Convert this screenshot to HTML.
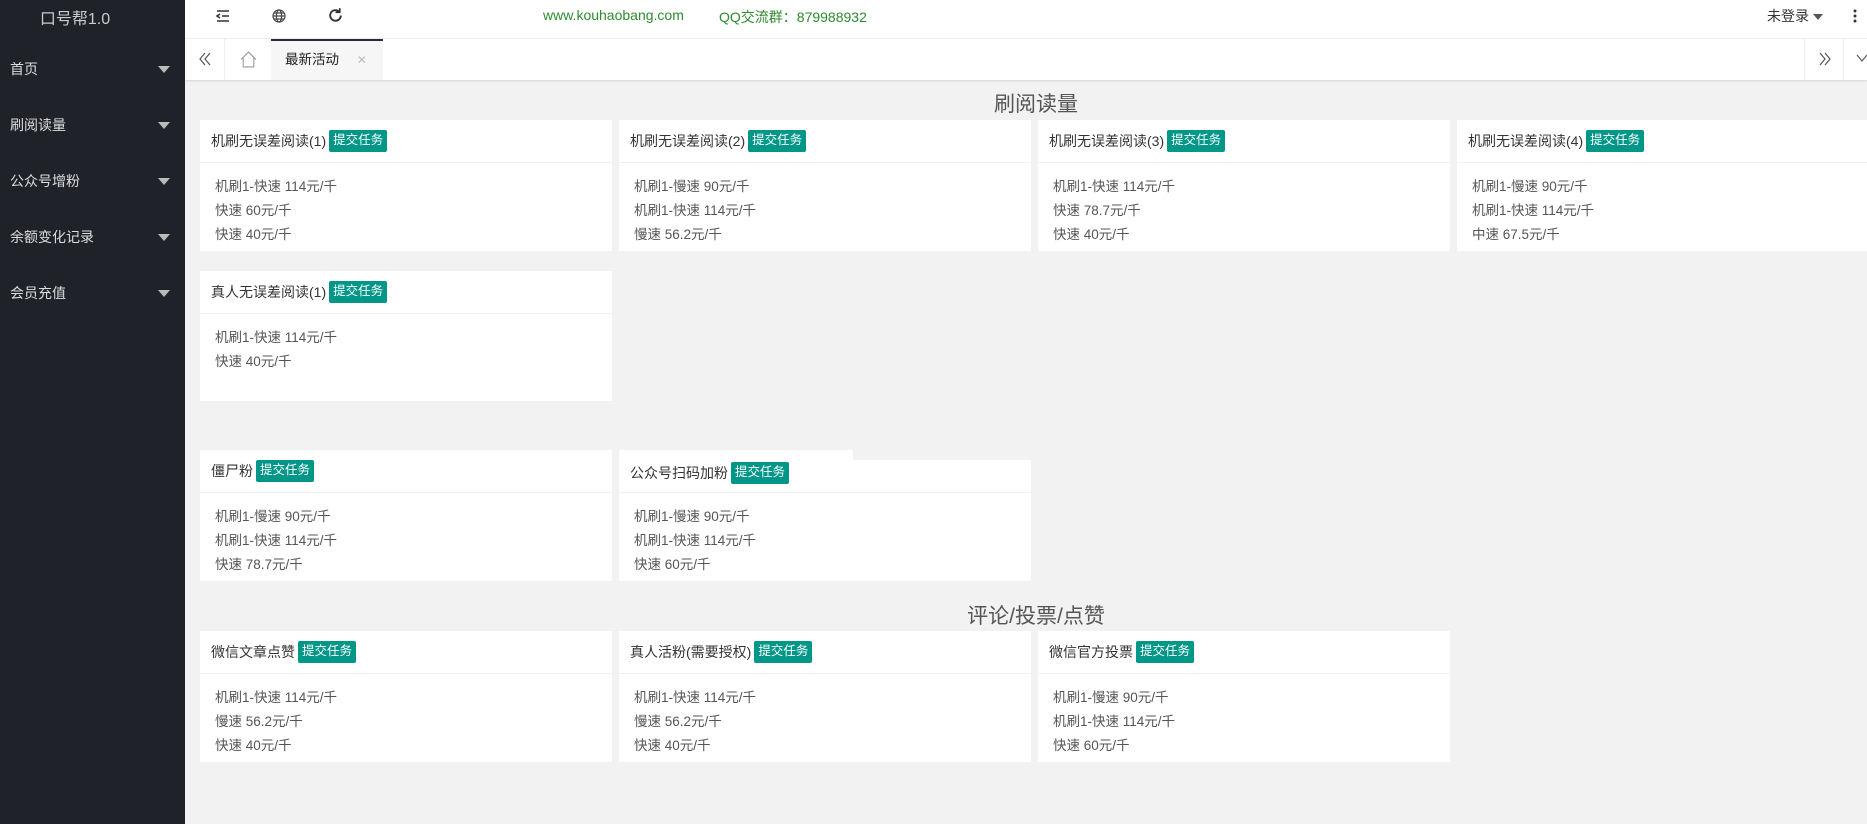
<!DOCTYPE html>
<html><head><meta charset="utf-8">
<style>
*{margin:0;padding:0;box-sizing:border-box}
body{width:1867px;height:824px;overflow:hidden;background:#f2f2f2;font-family:"Liberation Sans","Noto Sans CJK SC",sans-serif;position:relative;color:#333}
.abs{position:absolute}
#side{left:0;top:0;width:185px;height:824px;background:#20222a}
.logo{left:0;width:150px;top:5px;text-align:center;color:#ccc;font-size:16px}
.mi{left:10px;color:#ddd;font-size:14px}
.tri{left:158px;width:0;height:0;border-left:6px solid transparent;border-right:6px solid transparent;border-top:7px solid #bbb}
#hdr{left:185px;top:0;width:1682px;height:39px;background:#fff;border-bottom:1px solid #eee}
#tabs{left:185px;top:39px;width:1682px;height:41px;background:#fff;box-shadow:0 1px 2px rgba(0,0,0,.12)}
.card{position:absolute;background:#fff;width:412px}
.ch{height:43px;border-bottom:1px solid #f2f2f2;padding-left:11px;font-size:14px;line-height:43px;color:#333;white-space:nowrap}
.bd{display:inline-block;background:#009688;color:#fff;font-size:12.5px;line-height:21px;height:22px;padding:0 4px;border-radius:2px;vertical-align:middle;margin-left:3px;position:relative;top:-1px}
.cb{padding:12px 0 0 15px;font-size:13.5px;color:#555;line-height:24px}
.sec{font-size:21px;color:#555;width:1682px;left:195px;text-align:center}
</style></head><body>
<div id="side" class="abs">
 <div class="abs logo">口号帮1.0</div>
 <div class="abs mi" style="top:59px">首页</div><div class="abs tri" style="top:66px"></div>
 <div class="abs mi" style="top:115px">刷阅读量</div><div class="abs tri" style="top:122px"></div>
 <div class="abs mi" style="top:171px">公众号增粉</div><div class="abs tri" style="top:178px"></div>
 <div class="abs mi" style="top:227px">余额变化记录</div><div class="abs tri" style="top:234px"></div>
 <div class="abs mi" style="top:283px">会员充值</div><div class="abs tri" style="top:290px"></div>
</div>
<div id="hdr" class="abs">
 <svg class="abs" style="left:30px;top:8px" width="16" height="16" viewBox="0 0 16 16"><path d="M2 3h12M7 8h7M2 13h12M5 6L2 8l3 2" stroke="#333" stroke-width="1.6" fill="none"/></svg>
 <svg class="abs" style="left:86px;top:8px" width="16" height="16" viewBox="0 0 16 16" fill="none" stroke="#444" stroke-width="1.2"><circle cx="8" cy="8" r="6"/><ellipse cx="8" cy="8" rx="2.6" ry="6"/><path d="M2 8h12M3 5h10M3 11h10"/></svg>
 <svg class="abs" style="left:142px;top:7px" width="17" height="17" viewBox="0 0 16 16" fill="none" stroke="#333" stroke-width="1.8"><path d="M13 8a5 5 0 1 1-1.5-3.6"/><path d="M12 1v4H8" stroke-width="1.6"/></svg>
 <div class="abs" style="left:358px;top:7px;color:#2e8b2e;font-size:14px">www.kouhaobang.com</div>
 <div class="abs" style="left:534px;top:7px;color:#2e8b2e;font-size:14px">QQ交流群：879988932</div>
 <div class="abs" style="left:1582px;top:6px;font-size:14px;color:#333">未登录 <span style="display:inline-block;border-left:5px solid transparent;border-right:5px solid transparent;border-top:6px solid #555;vertical-align:middle"></span></div>
 <svg class="abs" style="left:1668px;top:8px" width="4" height="16"><circle cx="2" cy="3" r="1.5" fill="#333"/><circle cx="2" cy="8" r="1.5" fill="#333"/><circle cx="2" cy="13" r="1.5" fill="#333"/></svg>
</div>
<div id="tabs" class="abs">
 <div class="abs" style="left:0;top:0;width:40px;height:41px;border-right:1px solid #eee"></div>
 <svg class="abs" style="left:13px;top:13px" width="14" height="14" viewBox="0 0 14 14" fill="none" stroke="#555" stroke-width="1.2"><path d="M7 1L2 7l5 6M12 1L7 7l5 6"/></svg>
 <svg class="abs" style="left:55px;top:12px" width="17" height="17" viewBox="0 0 16 16" fill="none" stroke="#999" stroke-width="1"><path d="M1 8L8 1l7 7M3 6v9h10V6"/></svg>
 <div class="abs" style="left:86px;top:0;width:112px;height:41px;background:#f6f6f6;border-top:2px solid #292b34;font-size:13.5px;line-height:37px;padding-left:14px;color:#222">最新活动 <span style="color:#bbb;margin-left:14px;font-size:12px">✕</span></div>
 <div class="abs" style="left:1619px;top:0;width:40px;height:41px;border-left:1px solid #eee;border-right:1px solid #eee"></div>
 <svg class="abs" style="left:1633px;top:13px" width="14" height="14" viewBox="0 0 14 14" fill="none" stroke="#555" stroke-width="1.2"><path d="M2 1l5 6-5 6M7 1l5 6-5 6"/></svg>
 <svg class="abs" style="left:1671px;top:15px" width="12" height="8" viewBox="0 0 12 8" fill="none" stroke="#555" stroke-width="1.1"><path d="M1 1l5 6 5-6"/></svg>
</div>

<div class="abs sec" style="top:88px">刷阅读量</div>

<div class="card" style="left:200px;top:120px;height:131px"><div class="ch">机刷无误差阅读(1)<span class="bd">提交任务</span></div><div class="cb">机刷1-快速 114元/千<br>快速 60元/千<br>快速 40元/千</div></div>
<div class="card" style="left:619px;top:120px;height:131px"><div class="ch">机刷无误差阅读(2)<span class="bd">提交任务</span></div><div class="cb">机刷1-慢速 90元/千<br>机刷1-快速 114元/千<br>慢速 56.2元/千</div></div>
<div class="card" style="left:1038px;top:120px;height:131px"><div class="ch">机刷无误差阅读(3)<span class="bd">提交任务</span></div><div class="cb">机刷1-快速 114元/千<br>快速 78.7元/千<br>快速 40元/千</div></div>
<div class="card" style="left:1457px;top:120px;height:131px"><div class="ch">机刷无误差阅读(4)<span class="bd">提交任务</span></div><div class="cb">机刷1-慢速 90元/千<br>机刷1-快速 114元/千<br>中速 67.5元/千</div></div>

<div class="card" style="left:200px;top:271px;height:130px"><div class="ch">真人无误差阅读(1)<span class="bd">提交任务</span></div><div class="cb">机刷1-快速 114元/千<br>快速 40元/千</div></div>

<div class="card" style="left:200px;top:450px;height:131px"><div class="ch">僵尸粉<span class="bd">提交任务</span></div><div class="cb">机刷1-慢速 90元/千<br>机刷1-快速 114元/千<br>快速 78.7元/千</div></div>
<div class="abs" style="left:619px;top:450px;width:234px;height:12px;background:#fff"></div>
<div class="card" style="left:619px;top:460px;height:121px"><div class="ch" style="height:33px;line-height:26px">公众号扫码加粉<span class="bd">提交任务</span></div><div class="cb">机刷1-慢速 90元/千<br>机刷1-快速 114元/千<br>快速 60元/千</div></div>

<div class="abs sec" style="top:600px">评论/投票/点赞</div>

<div class="card" style="left:200px;top:631px;height:131px"><div class="ch">微信文章点赞<span class="bd">提交任务</span></div><div class="cb">机刷1-快速 114元/千<br>慢速 56.2元/千<br>快速 40元/千</div></div>
<div class="card" style="left:619px;top:631px;height:131px"><div class="ch">真人活粉(需要授权)<span class="bd">提交任务</span></div><div class="cb">机刷1-快速 114元/千<br>慢速 56.2元/千<br>快速 40元/千</div></div>
<div class="card" style="left:1038px;top:631px;height:131px"><div class="ch">微信官方投票<span class="bd">提交任务</span></div><div class="cb">机刷1-慢速 90元/千<br>机刷1-快速 114元/千<br>快速 60元/千</div></div>
</body></html>
